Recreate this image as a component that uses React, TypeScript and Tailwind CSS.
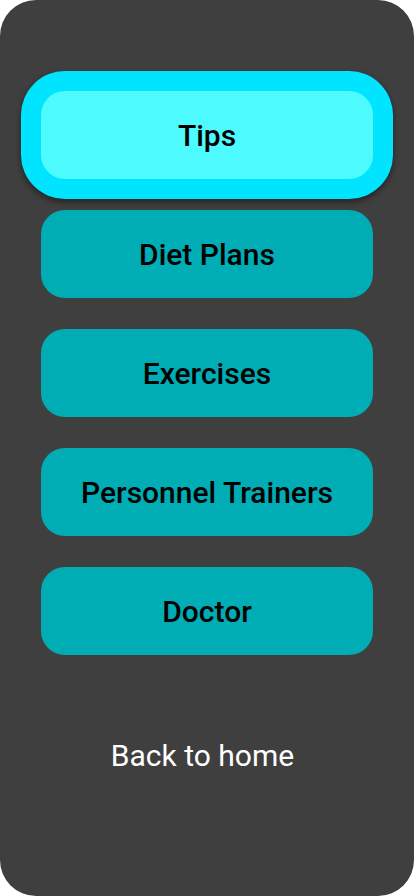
import React from "react";

const items = ["Diet Plans", "Exercises", "Personnel Trainers", "Doctor"];

export default function App() {
  return (
    <div className="h-[896px] w-[414px] bg-white font-['Roboto',sans-serif]">
      <div className="flex h-full w-full flex-col rounded-[36px] bg-[#3f3f3f] px-[21px] pt-[71px]">
        {/* selected item */}
        <div className="rounded-[44px] bg-[#00e4ff] p-5 shadow-[0_3px_6px_rgba(0,0,0,0.45)]">
          <button className="flex h-[88px] w-full items-center justify-center rounded-[24px] bg-[#4dfbff] text-[30px] font-medium text-black">
            Tips
          </button>
        </div>

        <div className="mt-[11px] flex flex-col gap-[31px] px-5">
          {items.map((label) => (
            <button
              key={label}
              className="flex h-[88px] w-full items-center justify-center rounded-[24px] bg-[#00adb5] text-[30px] font-medium text-black"
            >
              {label}
            </button>
          ))}
        </div>

        <div className="mt-[83px] pr-[9px] text-center text-[30px] leading-[35px] text-white">
          Back to home
        </div>
      </div>
    </div>
  );
}
